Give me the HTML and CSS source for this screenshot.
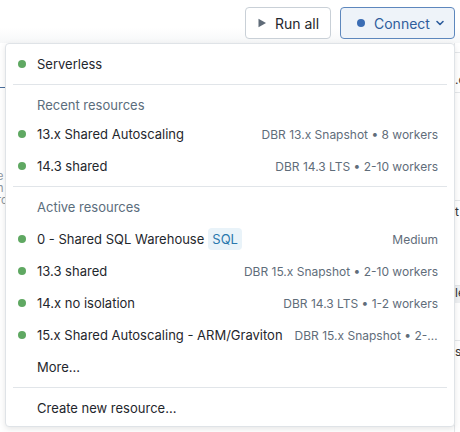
FILE: index.html
```html
<!DOCTYPE html>
<html>
<head>
<meta charset="utf-8">
<link rel="stylesheet" href="styles.css">
</head>
<body>
<div class="page">
  <div class="bg-left">
    <div class="bg-left-line"></div>
    <div class="bg-left-text">e<br>n<br>rc</div>
  </div>
  <div class="bg-right">
    <div class="bg-right-row r1">.c</div>
    <div class="bg-right-row r2"></div>
    <div class="bg-right-row r3">t</div>
    <div class="bg-right-row r4">le</div>
    <div class="bg-right-row r5">sc</div>
  </div>
  <div class="toolbar">
    <button class="btn btn-run">
      <svg class="play" width="10" height="10" viewBox="0 0 10 10"><path d="M1.5 0.8 L9 5 L1.5 9.2 Z" fill="#5f6b78"/></svg>
      <span>Run all</span>
    </button>
    <button class="btn btn-connect">
      <span class="cdot"></span>
      <span>Connect</span>
      <svg class="chev" width="10" height="10" viewBox="0 0 10 10"><path d="M2 3.5 L5 6.5 L8 3.5" fill="none" stroke="#2e5d9c" stroke-width="1.6" stroke-linecap="round" stroke-linejoin="round"/></svg>
    </button>
  </div>
  <div class="menu">
    <div class="item"><span class="dot"></span><span class="name">Serverless</span></div>
    <div class="sep"></div>
    <div class="header">Recent resources</div>
    <div class="item"><span class="dot"></span><span class="name">13.x Shared Autoscaling</span><span class="meta">DBR 13.x Snapshot • 8 workers</span></div>
    <div class="item"><span class="dot"></span><span class="name">14.3 shared</span><span class="meta">DBR 14.3 LTS • 2-10 workers</span></div>
    <div class="sep"></div>
    <div class="header header-tall">Active resources</div>
    <div class="item"><span class="dot"></span><span class="name">0 - Shared SQL Warehouse</span><span class="tag">SQL</span><span class="meta">Medium</span></div>
    <div class="item"><span class="dot"></span><span class="name">13.3 shared</span><span class="meta">DBR 15.x Snapshot • 2-10 workers</span></div>
    <div class="item"><span class="dot"></span><span class="name">14.x no isolation</span><span class="meta">DBR 14.3 LTS • 1-2 workers</span></div>
    <div class="item"><span class="dot"></span><span class="name">15.x Shared Autoscaling - ARM/Graviton</span><span class="meta trunc">DBR 15.x Snapshot • 2-10 workers</span></div>
    <div class="item plain"><span class="name">More...</span></div>
    <div class="sep"></div>
    <div class="item plain"><span class="name">Create new resource...</span></div>
  </div>
</div>
</body>
</html>
```
FILE: styles.css
```css
* { box-sizing: border-box; }
html, body { margin: 0; padding: 0; background: #fff; }
body {
  font-family: "Inter", "Liberation Sans", sans-serif;
  font-size: 13px;
  color: #1f272d;
  width: 460px;
  height: 432px;
  overflow: hidden;
}
.page {
  position: relative;
  width: 460px;
  height: 432px;
}
.bg-left {
  position: absolute;
  left: 0;
  top: 40px;
  width: 6px;
  height: 392px;
  overflow: hidden;
}
.bg-left-line {
  position: absolute;
  left: 0;
  top: 47px;
  width: 6px;
  height: 1px;
  background: #4a6e9c;
}
.bg-left-text {
  position: absolute;
  left: -3px;
  top: 130px;
  font-size: 11px;
  line-height: 12px;
  color: #8b949c;
}
.bg-right {
  position: absolute;
  right: 0;
  top: 40px;
  width: 6px;
  height: 392px;
  border-left: 1px solid #e4e7ea;
  overflow: hidden;
}
.bg-right-row {
  position: absolute;
  left: 0;
  width: 6px;
  font-size: 12px;
  color: #333;
  border-top: 1px solid #e4e7ea;
  line-height: 14px;
  overflow: hidden;
}
.r1 { top: 12px; height: 40px; padding-top: 20px; }
.r2 { top: 52px; height: 1px; }
.r3 { top: 160px; height: 40px; padding-top: 4px; }
.r4 { top: 245px; background: #eef0f2; height: 18px; }
.r5 { top: 300px; height: 30px; padding-top: 4px; }

.toolbar {
  position: relative;
  display: flex;
  justify-content: flex-end;
  gap: 9px;
  padding: 7px 5px 0 0;
  height: 43px;
  background: linear-gradient(#fff 0, #fff 28px, #f6f7f8 43px);
}
.btn {
  display: flex;
  align-items: center;
  height: 32px;
  border-radius: 4px;
  font-family: inherit;
  font-size: 14px;
  padding: 0;
  cursor: pointer;
}
.btn-run {
  width: 86px;
  justify-content: center;
  gap: 8px;
  background: #fff;
  border: 1px solid #c9d0d7;
  color: #1f272d;
}
.btn-connect {
  width: 115px;
  padding-left: 16px;
  gap: 9px;
  background: #eef3f9;
  border: 1px solid #5d87bd;
  color: #2e5d9c;
}
.cdot {
  width: 8px;
  height: 8px;
  border-radius: 50%;
  background: #3b6db4;
}
.chev { margin-left: -4px; }

.menu {
  position: absolute;
  left: 5px;
  top: 43px;
  width: 450px;
  height: 384px;
  background: #fff;
  border: 1px solid #dfe3e7;
  border-radius: 4px;
  box-shadow: 0 2px 6px rgba(0, 0, 0, 0.10);
  padding: 4px 0 2px;
}
.item {
  display: flex;
  align-items: center;
  height: 32px;
  padding: 0 16px 0 12px;
  white-space: nowrap;
}
.dot {
  flex: none;
  width: 8px;
  height: 8px;
  border-radius: 50%;
  background: #5fa862;
  margin-right: 11px;
}
.plain { padding-left: 31px; }
.name { flex: none; }
.meta {
  margin-left: auto;
  padding-left: 12px;
  font-size: 12px;
  color: #5f6d7a;
  overflow: hidden;
  text-overflow: ellipsis;
  min-width: 0;
}
.tag {
  flex: none;
  margin-left: 4px;
  padding: 1px 4px;
  border-radius: 4px;
  background: #e9f3f9;
  color: #2a78ad;
  line-height: 20px;
}
.sep {
  height: 1px;
  background: #e1e5e9;
  margin: 4px 7px;
}
.header {
  height: 29px;
  padding: 7px 0 0 31px;
  line-height: 18px;
  color: #5b6d7c;
}
.header-tall { height: 32px; }
```
